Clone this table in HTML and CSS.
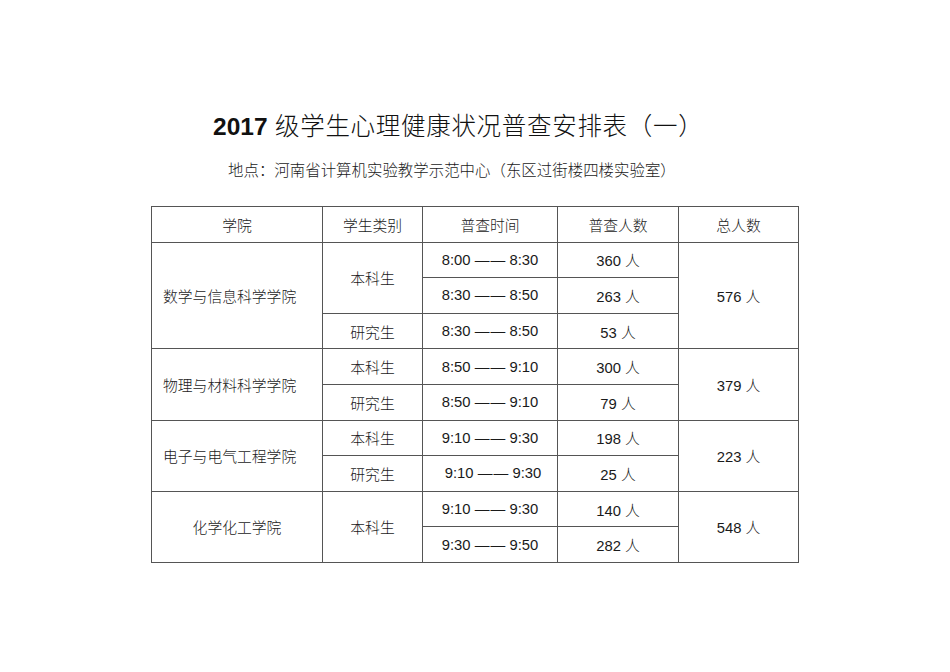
FILE: index.html
```html
<!DOCTYPE html>
<html lang="zh">
<head>
<meta charset="utf-8">
<link rel="stylesheet" href="styles.css">
</head>
<body>
<div class="page">
  <h1 class="title"><span class="year">2017</span> 级学生心理健康状况普查安排表（一）</h1>
  <p class="place">地点：河南省计算机实验教学示范中心（东区过街楼四楼实验室）</p>
  <table class="sched">
    <colgroup>
      <col class="c1"><col class="c2"><col class="c3"><col class="c4"><col class="c5">
    </colgroup>
    <thead>
      <tr><th>学院</th><th>学生类别</th><th>普查时间</th><th>普查人数</th><th>总人数</th></tr>
    </thead>
    <tbody>
      <tr><td rowspan="3" class="college">数学与信息科学学院</td><td rowspan="2">本科生</td><td>8:00 <span class="dash">——</span> 8:30</td><td>360 人</td><td rowspan="3">576 人</td></tr>
      <tr><td>8:30 <span class="dash">——</span> 8:50</td><td>263 人</td></tr>
      <tr><td>研究生</td><td>8:30 <span class="dash">——</span> 8:50</td><td>53 人</td></tr>
      <tr><td rowspan="2" class="college">物理与材料科学学院</td><td>本科生</td><td>8:50 <span class="dash">——</span> 9:10</td><td>300 人</td><td rowspan="2">379 人</td></tr>
      <tr><td>研究生</td><td>8:50 <span class="dash">——</span> 9:10</td><td>79 人</td></tr>
      <tr><td rowspan="2" class="college">电子与电气工程学院</td><td>本科生</td><td>9:10 <span class="dash">——</span> 9:30</td><td>198 人</td><td rowspan="2">223 人</td></tr>
      <tr><td>研究生</td><td class="shift">9:10 <span class="dash">——</span> 9:30</td><td>25 人</td></tr>
      <tr><td rowspan="2" class="college center">化学化工学院</td><td rowspan="2">本科生</td><td>9:10 <span class="dash">——</span> 9:30</td><td>140 人</td><td rowspan="2">548 人</td></tr>
      <tr><td>9:30 <span class="dash">——</span> 9:50</td><td>282 人</td></tr>
    </tbody>
  </table>
</div>
</body>
</html>
```

FILE: styles.css
```css
html, body {
  margin: 0;
  padding: 0;
  background: #ffffff;
}
body {
  font-family: "Liberation Sans", "Noto Sans CJK SC", sans-serif;
  color: #1a1a1a;
}
.page {
  width: 950px;
  height: 672px;
  padding-top: 113px;
  box-sizing: border-box;
}
.title {
  margin: 0 0 0 213px;
  font-size: 24.5px;
  line-height: 28px;
  font-weight: 300;
  letter-spacing: 0.7px;
  color: #111;
  white-space: nowrap;
}
.year {
  font-weight: 700;
  letter-spacing: 0;
  font-family: "Liberation Sans", sans-serif;
}
.place {
  margin: 21px 0 0 228px;
  font-size: 15.4px;
  line-height: 18px;
  font-weight: 300;
  letter-spacing: 0.05px;
  color: #1a1a1a;
  white-space: nowrap;
}
.sched {
  margin: 26px 0 0 151px;
  border-collapse: collapse;
  table-layout: fixed;
  width: 647px;
  font-size: 14.8px;
  font-weight: 300;
  color: #1a1a1a;
}
.c1 { width: 171px; }
.c2 { width: 100px; }
.c3 { width: 135px; }
.c4 { width: 121px; }
.c5 { width: 120px; }
.sched th,
.sched td {
  border: 1px solid #555;
  height: 34.6px;
  padding: 0;
  text-align: center;
  vertical-align: middle;
  font-weight: 300;
  white-space: nowrap;
}
.sched td.college {
  text-align: left;
  padding-left: 11px;
}
.sched td.college.center {
  text-align: center;
  padding-left: 0;
}
.dash {
  letter-spacing: 1px;
  margin-right: -1px;
}
.shift {
  padding-left: 6px !important;
}
```
